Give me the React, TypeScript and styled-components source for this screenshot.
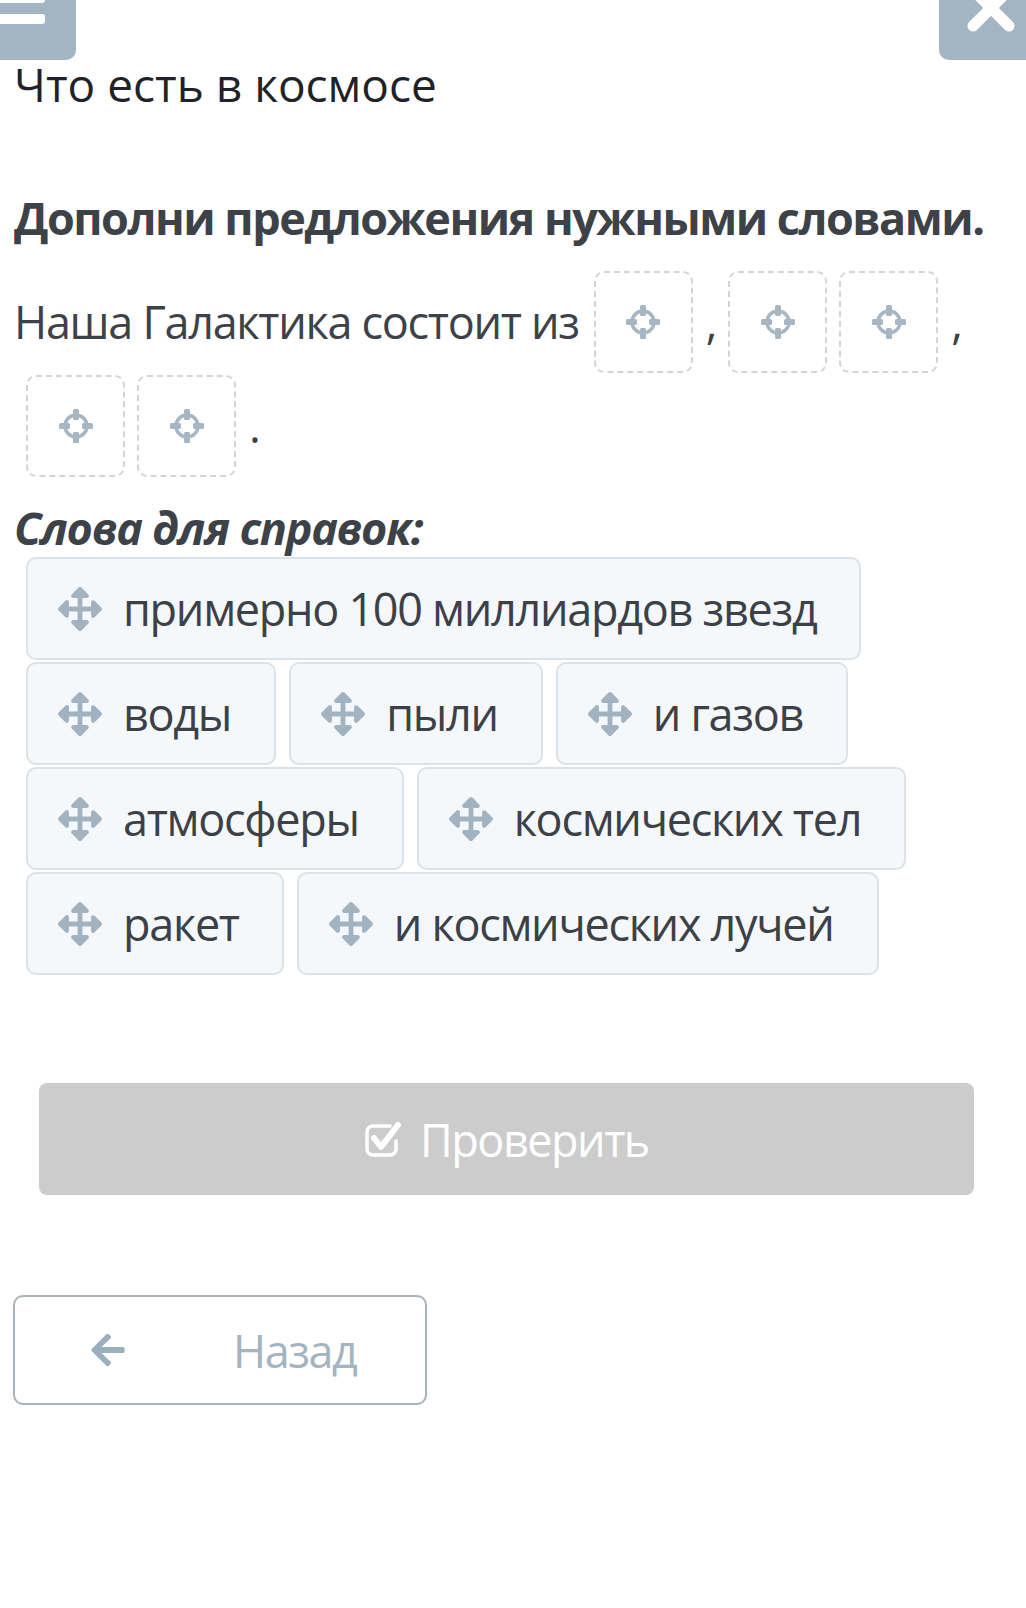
import styled, { createGlobalStyle } from "styled-components";
import { FaArrowsAlt, FaArrowLeft } from "react-icons/fa";

const GlobalStyle = createGlobalStyle`
  html, body {
    margin: 0;
    padding: 0;
    background: #ffffff;
  }
  body {
    font-family: "Open Sans", "Noto Sans", sans-serif;
    color: #3c4147;
  }
  * {
    box-sizing: border-box;
  }
`

const Page = styled.div`
  width: 1026px;
  min-height: 1608px;
`

const TopBar = styled.header`
  display: flex;
  justify-content: space-between;
  height: 60px;
`

const CornerButton = styled.div<{ $side: "left" | "right" }>`
  width: ${p => (p.$side === "left" ? "76px" : "87px")};
  height: 60px;
  background: #a3b5c2;
  border-radius: ${p => (p.$side === "left" ? "0 0 10px 0" : "0 0 0 10px")};
  svg {
    display: block;
  }
`

const Content = styled.main`
  padding: 0 14px;
  font-size: 45px;
  letter-spacing: -1.3px;
`

const Title = styled.h1`
  margin: -2px 0 0;
  font-size: 46px;
  line-height: 52px;
  font-weight: 400;
  letter-spacing: 0;
  color: #1f2327;
`

const Task = styled.h2`
  margin: 78px 0 0;
  font-size: 45px;
  line-height: 60px;
  font-weight: 700;
  letter-spacing: -1.5px;
  color: #3d4248;
`

const Sentence = styled.div`
  margin-top: 22px;
  display: flex;
  flex-wrap: wrap;
  align-items: center;
  line-height: 60px;
  color: #3d4248;
`

const Lead = styled.span`
  margin-right: 3px;
`

const Slot = styled.div`
  width: 99px;
  height: 102px;
  margin: 1px 0 1px 12px;
  border: 2px dashed #cfd5da;
  border-radius: 10px;
  display: flex;
  align-items: center;
  justify-content: center;
`

const Mark = styled.span`
  margin-left: 13px;
`

const Hint = styled.h3`
  margin: 22px 0 0;
  font-size: 45px;
  line-height: 56px;
  font-weight: 700;
  font-style: italic;
  color: #3d4248;
`

const Bank = styled.div`
  display: flex;
  flex-wrap: wrap;
  gap: 2px 13px;
  margin: 1px 0 0 12px;
`

const Chip = styled.div`
  display: flex;
  align-items: center;
  gap: 21px;
  height: 103px;
  padding: 0 43px 0 30px;
  border: 2px solid #dce2e7;
  border-radius: 10px;
  background: #f4f8fb;
  color: #3c4147;
  svg {
    color: #a1b3c0;
    flex: none;
  }
`

const CheckButton = styled.button`
  display: flex;
  align-items: center;
  justify-content: center;
  gap: 18px;
  width: 935px;
  height: 112px;
  margin: 108px 0 0 25px;
  border: none;
  border-radius: 8px;
  background: #cccccc;
  color: #ffffff;
  font-family: "Open Sans", "Noto Sans", sans-serif;
  font-size: 45px;
  letter-spacing: -1.5px;
`

const BackButton = styled.button`
  display: flex;
  align-items: center;
  gap: 106px;
  width: 414px;
  height: 110px;
  margin: 100px 0 0 -1px;
  padding: 0 0 0 74px;
  border: 2px solid #a9b2b9;
  border-radius: 10px;
  background: #ffffff;
  color: #a3b4c1;
  font-family: "Open Sans", "Noto Sans", sans-serif;
  font-size: 45px;
  letter-spacing: -1.5px;
  svg {
    color: #9bb0bd;
  }
`

function Crosshair() {
  return (
    <svg width="34" height="36" viewBox="0 0 34 36">
      <circle cx="17" cy="18" r="11" fill="none" stroke="#a6b6c2" strokeWidth="3.5" />
      <rect x="14" y="1" width="6" height="11" rx="1.5" fill="#a6b6c2" />
      <rect x="14" y="24" width="6" height="11" rx="1.5" fill="#a6b6c2" />
      <rect x="0" y="15" width="11" height="6" rx="1.5" fill="#a6b6c2" />
      <rect x="23" y="15" width="11" height="6" rx="1.5" fill="#a6b6c2" />
    </svg>
  )
}

function CheckSquare() {
  return (
    <svg width="38" height="36" viewBox="0 0 38 36">
      <path
        d="M26 5H9a6 6 0 0 0-6 6v17a6 6 0 0 0 6 6h17a6 6 0 0 0 6-6v-8"
        fill="none"
        stroke="#ffffff"
        strokeWidth="3.5"
        strokeLinecap="round"
      />
      <path
        d="M10 17l7 9L34 4"
        fill="none"
        stroke="#ffffff"
        strokeWidth="6"
        strokeLinecap="round"
        strokeLinejoin="round"
      />
    </svg>
  )
}

const slotIcon = <Crosshair />

const words = [
  "примерно 100 миллиардов звезд",
  "воды",
  "пыли",
  "и газов",
  "атмосферы",
  "космических тел",
  "ракет",
  "и космических лучей",
]

export default function App() {
  return (
    <Page>
      <GlobalStyle />
      <TopBar>
        <CornerButton $side="left">
          <svg width="76" height="60" viewBox="0 0 76 60">
            <rect x="-6" y="-7" width="51" height="10" rx="3" fill="#ffffff" />
            <rect x="-6" y="14" width="51" height="10" rx="3" fill="#ffffff" />
          </svg>
        </CornerButton>
        <CornerButton $side="right">
          <svg width="87" height="60" viewBox="0 0 87 60">
            <path d="M34 -10L70 26M70 -10L34 26" stroke="#ffffff" strokeWidth="11" strokeLinecap="round" />
          </svg>
        </CornerButton>
      </TopBar>
      <Content>
        <Title>Что есть в космосе</Title>
        <Task>Дополни предложения нужными словами.</Task>
        <Sentence>
          <Lead>Наша Галактика состоит из</Lead>
          <Slot>{slotIcon}</Slot>
          <Mark>,</Mark>
          <Slot>{slotIcon}</Slot>
          <Slot>{slotIcon}</Slot>
          <Mark>,</Mark>
          <Slot>{slotIcon}</Slot>
          <Slot>{slotIcon}</Slot>
          <Mark>.</Mark>
        </Sentence>
        <Hint>Слова для справок:</Hint>
        <Bank>
          {words.map(w => (
            <Chip key={w}>
              <FaArrowsAlt size={44} />
              <span>{w}</span>
            </Chip>
          ))}
        </Bank>
        <CheckButton>
          <CheckSquare />
          <span>Проверить</span>
        </CheckButton>
        <BackButton>
          <FaArrowLeft size={38} />
          <span>Назад</span>
        </BackButton>
      </Content>
    </Page>
  )
}
